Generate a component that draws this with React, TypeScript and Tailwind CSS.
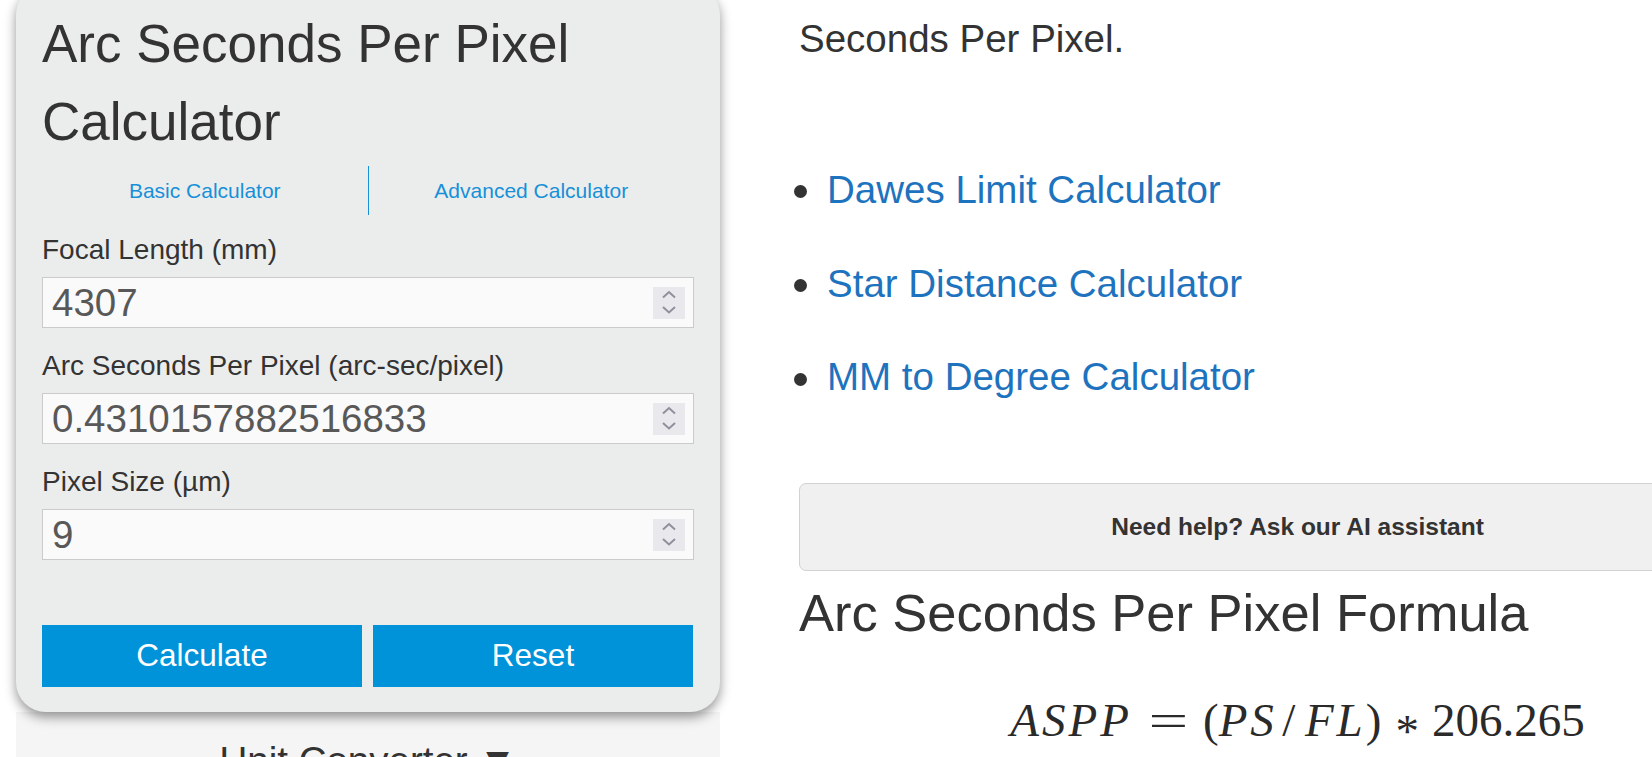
import React from "react";

const fields = [
  { label: "Focal Length (mm)", value: "4307" },
  { label: "Arc Seconds Per Pixel (arc-sec/pixel)", value: "0.4310157882516833" },
  { label: "Pixel Size (µm)", value: "9" },
];

const links = ["Dawes Limit Calculator", "Star Distance Calculator", "MM to Degree Calculator"];

const Spinner: React.FC = () => (
  <div className="w-[32px] h-[32px] mr-[8px] bg-[#e9e9ed] shrink-0">
    <svg width="32" height="32" viewBox="0 0 32 32" fill="none" stroke="#8f8f9d" strokeWidth="2">
      <path d="M10 10.5 L16 5 L22 10.5" />
      <path d="M10 20 L16 25.5 L22 20" />
    </svg>
  </div>
);

const NumberField: React.FC<{ label: string; value: string; first?: boolean }> = ({ label, value, first }) => (
  <div className={first ? "mt-[14px]" : "mt-[17px]"}>
    <label className="block text-[28px] leading-[42px] text-[#333]">{label}</label>
    <div className="mt-[6px] h-[51px] flex items-center border border-[#cbcbcb] bg-[#fafafa]">
      <input
        readOnly
        value={value}
        className="flex-1 min-w-0 h-full bg-transparent pl-[9px] text-[38.5px] text-[#585858] outline-none font-['Liberation_Sans',sans-serif]"
      />
      <Spinner />
    </div>
  </div>
);

const App: React.FC = () => {
  return (
    <div className="w-[1652px] h-[757px] overflow-hidden bg-white flex items-start font-['Liberation_Sans',Arial,sans-serif] text-[#333]">
      {/* left column: calculator card */}
      <div className="ml-[16px] w-[704px] shrink-0 -mt-[15px] flex flex-col">
        <div className="relative z-10 bg-[#ebeded] rounded-[30px] shadow-[0_5px_12px_rgba(0,0,0,0.42)] pt-[20px] px-[26px] pb-[25px]">
          <h1 className="text-[53px] leading-[78px] font-normal text-[#333]">
            Arc Seconds Per Pixel
            <br />
            Calculator
          </h1>
          <div className="mt-[5px] flex h-[49px]">
            <div className="flex-1 flex items-center justify-center text-[21px] text-[#1790d8]">Basic Calculator</div>
            <div className="flex-1 flex items-center justify-center text-[21px] text-[#1790d8] border-l border-[#1790d8]">
              Advanced Calculator
            </div>
          </div>
          {fields.map((f, i) => (
            <NumberField key={f.label} label={f.label} value={f.value} first={i === 0} />
          ))}
          <div className="mt-[65px] flex gap-[11px]">
            <button className="w-[320px] h-[62px] bg-[#0093d9] text-white text-[31.5px]">Calculate</button>
            <button className="w-[320px] h-[62px] bg-[#0093d9] text-white text-[31.5px]">Reset</button>
          </div>
        </div>
        <div className="bg-[#f5f5f5] h-[120px] pt-[20px] text-center text-[38.5px] leading-[1.5] text-[#333]">
          Unit Converter ▼
        </div>
      </div>

      {/* right column: article */}
      <div className="ml-[79px] w-[997px] shrink-0">
        <p className="mt-[10px] text-[38.5px] leading-[1.5]">Seconds Per Pixel.</p>
        <ul className="mt-[93px] flex flex-col">
          {links.map((l) => (
            <li key={l} className="flex items-center mb-[36px] text-[38.5px] leading-[1.5]">
              <span className="-ml-[5px] mt-[4px] w-[13px] h-[13px] rounded-full bg-[#333] shrink-0" />
              <a className="ml-[20px] text-[#1e73be]">{l}</a>
            </li>
          ))}
        </ul>
        <div className="mt-[41px] h-[88px] flex items-center justify-center bg-[#f0f0f0] border border-[#d2d2d2] rounded-[7px] text-[24.5px] font-bold text-[#333]">
          Need help? Ask our AI assistant
        </div>
        <h2 className="mt-[10px] text-[52.5px] leading-[1.2] font-normal">Arc Seconds Per Pixel Formula</h2>
        <div className="mt-[48px] text-center text-[47px] leading-[1.2] font-['Liberation_Serif',serif] text-[#2a2a2a] whitespace-nowrap">
          <i className="tracking-[3px]">ASPP</i>
          <span className="inline-block w-[39px] ml-[17px] mr-[15px] text-center scale-x-150">=</span>
          <span>(</span>
          <i className="tracking-[3px]">PS</i>
          <span className="inline-block w-[20px] ml-[2px] text-center">/</span>
          <i className="ml-[6px] tracking-[3px]">FL</i>
          <span>)</span>
          <span className="inline-block ml-[14px] mr-[13px] translate-y-[11px]">*</span>
          <span>206.265</span>
        </div>
      </div>
    </div>
  );
};

export default App;
